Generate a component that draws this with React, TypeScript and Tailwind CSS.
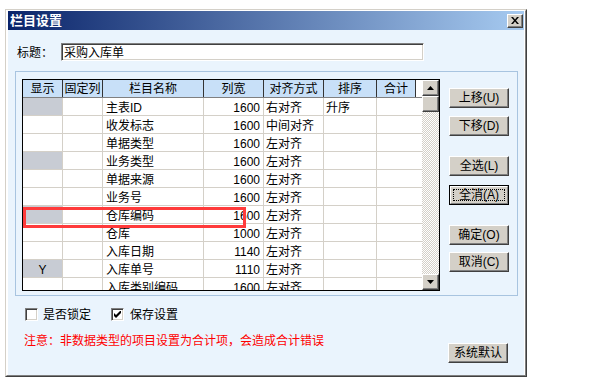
const rows = [
  { show: '', gray: true, name: '主表ID', width: '1600', align: '右对齐', sort: '升序' },
  { show: '', gray: false, name: '收发标志', width: '1600', align: '中间对齐', sort: '' },
  { show: '', gray: false, name: '单据类型', width: '1600', align: '左对齐', sort: '' },
  { show: '', gray: true, name: '业务类型', width: '1600', align: '左对齐', sort: '' },
  { show: '', gray: false, name: '单据来源', width: '1600', align: '左对齐', sort: '' },
  { show: '', gray: false, name: '业务号', width: '1600', align: '左对齐', sort: '' },
  { show: '', gray: true, name: '仓库编码', width: '1600', align: '左对齐', sort: '' },
  { show: '', gray: false, name: '仓库', width: '1000', align: '左对齐', sort: '' },
  { show: '', gray: false, name: '入库日期', width: '1140', align: '左对齐', sort: '' },
  { show: 'Y', gray: true, name: '入库单号', width: '1110', align: '左对齐', sort: '' },
  { show: '', gray: false, name: '入库类别编码', width: '1600', align: '左对齐', sort: '' },
];

function Btn({ label, isDefault }: { label: string; isDefault?: boolean }) {
  if (isDefault) {
    return (
      <div className="w-[60px] h-[20px] border border-black bg-[#d4d0c8]">
        <div className="h-full border border-t-white border-l-white border-r-[#808080] border-b-[#808080] flex items-center justify-center p-[2px]">
          <div className="w-full h-full border border-dotted border-black flex items-center justify-center">{label}</div>
        </div>
      </div>
    );
  }
  return (
    <div className="w-[60px] h-[20px] bg-[#d4d0c8] border border-t-white border-l-white border-r-[#404040] border-b-[#404040] shadow-[inset_-1px_-1px_#808080] flex items-center justify-center">
      {label}
    </div>
  );
}

function Check({ checked }: { checked?: boolean }) {
  return (
    <div className="w-[13px] h-[13px] bg-white border border-t-[#808080] border-l-[#808080] border-r-white border-b-white shadow-[inset_1px_1px_#404040,inset_-1px_-1px_#d4d0c8] flex items-center justify-center">
      {checked && (
        <svg width="7" height="7" viewBox="0 0 7 7">
          <path d="M0 2v3l2 2 5-5V-1L2 4z" fill="#000" />
        </svg>
      )}
    </div>
  );
}

function ScrollBtn({ up }: { up?: boolean }) {
  return (
    <div className="w-[17px] h-[16px] bg-[#d4d0c8] border border-t-white border-l-white border-r-[#404040] border-b-[#404040] shadow-[inset_-1px_-1px_#808080] flex items-center justify-center">
      <svg width="7" height="4" viewBox="0 0 7 4">
        {up ? <path d="M3.5 0L7 4H0z" fill="#000" /> : <path d="M0 0h7L3.5 4z" fill="#000" />}
      </svg>
    </div>
  );
}

const cols = ['w-[40px]', 'w-[40px]', 'w-[101px]', 'w-[60px]', 'w-[60px]', 'w-[53px]', 'w-[39px]'];
const heads = ['显示', '固定列', '栏目名称', '列宽', '对齐方式', '排序', '合计'];

export default function App() {
  return (
    <div className="w-[590px] h-[384px] bg-white text-[12px] leading-[14px] text-black font-['Liberation_Sans','Noto_Sans_CJK_SC',sans-serif]">
      <div className="h-[9px]" />
      <div className="ml-[5px] w-[522px] h-[368px] border border-t-[#d4d0c8] border-l-[#d4d0c8] border-r-[#404040] border-b-[#404040]">
        <div className="h-full border border-t-white border-l-white border-r-[#808080] border-b-[#808080] px-[1px] flex flex-col">
          {/* title bar */}
          <div className="h-[19px] flex items-center justify-between bg-[linear-gradient(to_right,#0a246a,#a6caf0)] pl-[2px] pr-[1px]">
            <span className="text-white font-bold text-[13px]">栏目设置</span>
            <div className="w-[16px] h-[14px] bg-[#d4d0c8] border border-t-white border-l-white border-r-[#404040] border-b-[#404040] shadow-[inset_-1px_-1px_#808080] flex items-center justify-center">
              <svg width="8" height="7" viewBox="0 0 8 7">
                <path d="M0 0h2l2 2.5L6 0h2L5 3.5 8 7H6L4 4.5 2 7H0l3-3.5z" fill="#000" />
              </svg>
            </div>
          </div>

          {/* body */}
          <div className="flex-1 bg-[#eaf4fd] flex flex-col">
            <div className="mt-[13px] ml-[9px] flex items-center">
              <span className="w-[44px] pt-[1px]">标题：</span>
              <div className="w-[363px] h-[18px] bg-white border border-t-[#808080] border-l-[#808080] border-r-white border-b-white shadow-[inset_1px_1px_#404040,inset_-1px_-1px_#d4d0c8] flex items-center pl-[2px] pt-[1px]">
                采购入库单
              </div>
            </div>

            {/* group box */}
            <div className="mt-[10px] ml-[7px] w-[503px] h-[225px] border border-[#a8c4e0] flex pl-[6px] pt-[7px]">
              <div className="relative w-[418px] h-[212px] border border-black bg-white flex">
                <div className="flex flex-col w-[399px] overflow-hidden">
                  <div className="flex h-[18px] shrink-0 border-b border-[#808080]">
                    {heads.map((h, i) => (
                      <div key={h} className={`${cols[i]} h-full bg-[#c8e0f8] border-r border-[#333] flex items-center justify-center pt-[1px]`}>
                        {h}
                      </div>
                    ))}
                  </div>
                  {rows.map((r) => (
                    <div key={r.name} className="flex h-[18px] shrink-0 border-b border-[#d4d0c8]">
                      <div className={`w-[40px] h-full border-r border-[#d4d0c8] flex items-center justify-center pt-[2px] ${r.gray ? 'bg-[#c8ccd4]' : ''}`}>{r.show}</div>
                      <div className="w-[40px] h-full border-r border-[#d4d0c8]" />
                      <div className="w-[101px] h-full border-r border-[#d4d0c8] flex items-center pl-[3px] pt-[2px]">{r.name}</div>
                      <div className="w-[60px] h-full border-r border-[#d4d0c8] flex items-center justify-end pr-[3px] pt-[2px]">{r.width}</div>
                      <div className="w-[60px] h-full border-r border-[#d4d0c8] flex items-center pl-[2px] pt-[2px]">{r.align}</div>
                      <div className="w-[53px] h-full border-r border-[#d4d0c8] flex items-center pl-[2px] pt-[2px]">{r.sort}</div>
                      <div className="w-[39px] h-full" />
                    </div>
                  ))}
                </div>
                <div className="w-[17px] flex flex-col">
                  <ScrollBtn up />
                  <div className="w-[17px] h-[16px] bg-[#d4d0c8] border border-t-white border-l-white border-r-[#404040] border-b-[#404040] shadow-[inset_-1px_-1px_#808080]" />
                  <div className="flex-1 bg-[repeating-conic-gradient(#d4d0c8_0%_25%,#ffffff_0%_50%)] bg-[length:2px_2px]" />
                  <ScrollBtn />
                </div>
                <div className="absolute left-0 top-[127px] w-[223px] h-[21px] border-[3px] border-[#ff3b3b]" />
              </div>

              <div className="ml-[9px] mt-[9px] flex flex-col">
                <Btn label="上移(U)" />
                <div className="mt-[8px]"><Btn label="下移(D)" /></div>
                <div className="mt-[20px]"><Btn label="全选(L)" /></div>
                <div className="mt-[9px]"><Btn label="全消(A)" isDefault /></div>
                <div className="mt-[20px]"><Btn label="确定(O)" /></div>
                <div className="mt-[7px]"><Btn label="取消(C)" /></div>
              </div>
            </div>

            {/* options */}
            <div className="mt-[11px] ml-[17px] flex items-center">
              <Check />
              <span className="ml-[5px] pt-[1px]">是否锁定</span>
              <div className="ml-[20px]"><Check checked /></div>
              <span className="ml-[6px] pt-[1px]">保存设置</span>
            </div>

            <div className="flex items-start">
              <div className="mt-[12px] ml-[16px] text-[#ff0000]">注意：非数据类型的项目设置为合计项，会造成合计错误</div>
              <div className="ml-auto mr-[16px] mt-[21px]">
                <Btn label="系统默认" />
              </div>
            </div>
          </div>
        </div>
      </div>
    </div>
  );
}
